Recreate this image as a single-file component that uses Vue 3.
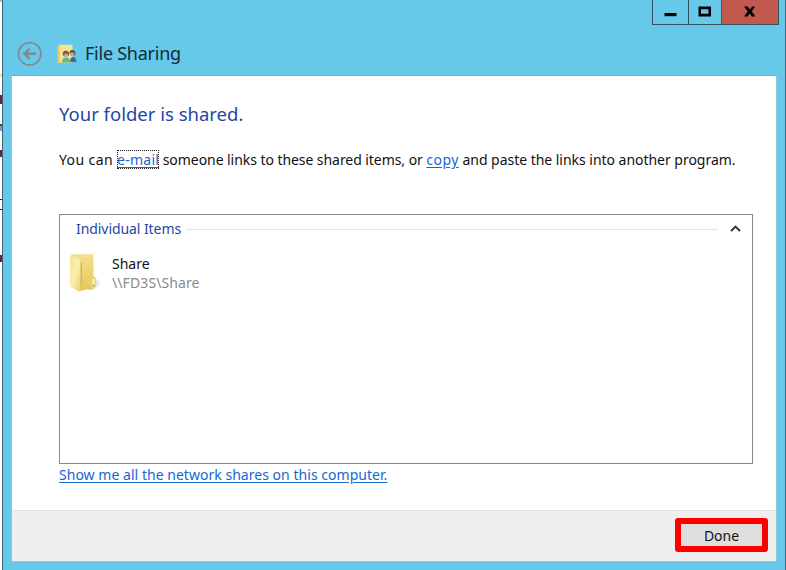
<script setup>
// Slivers of the window behind the dialog: [top, height, colour]
const slivers = [
  [0, 2, '#b9b9b9'],
  [74, 3, '#f4dc8c'],
  [95, 9, '#6b2344'],
  [124, 2, '#34445c'],
  [126, 5, '#7d9bd0'],
  [150, 7, '#6b2344'],
  [199, 1, '#222'],
  [209, 1, '#222'],
  [255, 7, '#6b2344'],
]
</script>

<template>
  <div class="screen">
    <div class="behind">
      <i v-for="s in slivers" :key="s[0]" :style="{ top: s[0] + 'px', height: s[1] + 'px', background: s[2] }"></i>
    </div>
    <div class="window">
      <header class="titlebar">
        <svg class="back" width="26" height="26" viewBox="0 0 26 26" fill="none" stroke="#80898e">
          <circle cx="12.700" cy="12.800" r="11.300" stroke-width="1.600" />
          <path d="M19 12.800H8.500M12.500 7.800l-5 5 5 5" stroke-width="2.600" />
        </svg>
        <svg class="logo" width="20" height="20" viewBox="0 0 20 20">
          <path d="M.8 1Q8 .3 15.500 1v17.500L.8 19z" fill="#f9e391" />
          <path d="M.8 1l2 .3V19h-2z" fill="#e8c96a" />
          <path d="M13 18q0-5 3-5t3.500 5z" fill="#356fa4" />
          <circle cx="15.500" cy="10" r="2.400" fill="#d0a47c" />
          <path d="M12.500 9.800Q12 6 15.200 6t3.300 3.800l-.8 2.200-1-3.200-2.700-.3z" fill="#5a5148" />
          <path d="M5 18.500q0-5 4-5t4.500 5z" fill="#62b98f" />
          <circle cx="9" cy="10.800" r="2.500" fill="#d6ad88" />
          <path d="M5.800 11Q5.500 6.800 8.800 6.800t3.400 3.500l-.8 2-1-2.900-2.500.2-.8 2.500z" fill="#665848" />
        </svg>
        <h1>File Sharing</h1>
        <div class="controls">
          <button class="min"><svg width="14" height="12"><path d="M.5 7h12v3.200H.5z" /></svg></button>
          <button class="max"><svg width="14" height="12"><path fill-rule="evenodd" d="M.5 .5h12.500v10H.5zM3 3.300v4.500h7.500V3.300z" /></svg></button>
          <button class="close"><svg width="14" height="12"><path d="M1 .5h3.700L7 3.600 9.300 .5H12L8.800 5.500l3.600 5H8.900L6.800 7.500 4.600 10.500H1l3.700-5z" /></svg></button>
        </div>
      </header>

      <main>
        <section class="body">
          <h2>Your folder is shared.</h2>
          <p class="info"><span class="lead">You can </span><a class="focus">e-mail</a><span class="middle"> someone links to these shared items, or </span><a class="copy">copy</a><span class="tail"> and paste the links into another program.</span></p>
          <div class="list">
            <div class="group">
              <span>Individual Items</span>
              <hr />
              <svg width="12" height="10" fill="none" stroke="#333" stroke-width="1.900"><path d="M2 7L6.500 2.500 11 7" /></svg>
            </div>
            <div class="item">
              <svg width="38" height="42" viewBox="0 0 38 42">
                <defs>
                  <linearGradient id="front" x2="1" y2="1"><stop stop-color="#f3e39a" /><stop offset=".5" stop-color="#fbefae" /><stop offset="1" stop-color="#ecd06c" /></linearGradient>
                  <linearGradient id="inner" x2="0" y2="1"><stop stop-color="#f3e08d" /><stop offset="1" stop-color="#e5c658" /></linearGradient>
                  <linearGradient id="shade" x2="1"><stop stop-color="#999" stop-opacity=".6" /><stop offset="1" stop-color="#bbb" stop-opacity="0" /></linearGradient>
                </defs>
                <path d="M20 38l7-12 8 5-10 7z" fill="url(#shade)" />
                <path d="M3 3.500Q4 2.300 6 2.200L24 2.300q1.500.2 1.500 1.700v20l2 2v8.500L25 36l-13 3z" fill="url(#inner)" />
                <path d="M12 10l1.800 1v21L12 38z" fill="#d3b24c" />
                <path d="M2 4q0-1 1.500-.5L10.500 7q2 1 2 3V38q0 2-1.500 1.500l-7.500-4Q2 34.500 2 33z" fill="url(#front)" />
                <path d="M22 27l2.500-3 3 2.500v8L25 36.500l-3 .5z" fill="#ecd16c" />
                <path d="M25.500 27.500v5" stroke="#fffbe2" stroke-width="1.600" stroke-linecap="round" />
                <path d="M25.500 32.500v2" stroke="#79b5c4" stroke-width="1.600" />
              </svg>
              <div class="names"><b>Share</b><span>\\FD3S\Share</span></div>
            </div>
          </div>
          <a class="all">Show me all the network shares on this computer.</a>
        </section>
        <footer><button class="done">Done</button></footer>
      </main>
    </div>
  </div>
</template>

<style>
body { overflow: hidden; }
</style>

<style scoped>
* { box-sizing: border-box; }
.screen { display: flex; width: 786px; height: 570px; background: #fff; font: 14px/20px "Noto Sans", "Open Sans", sans-serif; color: #111; white-space: nowrap; }
.behind { position: relative; width: 2px; }
.behind i { position: absolute; left: 0; width: 2px; }
.window { display: flex; flex-direction: column; width: 784px; height: 570px; padding: 0 8px 0 8px; background: #66c9e9; border-left: 1px solid #3b6678; border-right: 1px solid #316b80; }
.titlebar { display: flex; height: 75px; padding: 41px 0 0 6px; flex: none; }
.back { flex: none; }
.logo { flex: none; margin: 3px 0 0 14px; }
h1 { margin: 0 0 0 8px; font-size: 18px; line-height: 25px; font-weight: 400; color: #102d38; letter-spacing: -.25px; }
.controls { display: flex; margin: -41px -2px 0 auto; height: 25px; border: 1px solid #36525d; border-top: 0; }
.controls button { display: flex; align-items: flex-start; justify-content: center; padding: 6px 0 0; border: 0; background: none; }
.controls .min { width: 35px; }
.controls .max { width: 33px; border-left: 1px solid #36525d; }
.controls .close { width: 57px; background: #c2594f; border-left: 1px solid #664a4b; }
main { display: flex; flex-direction: column; width: 766px; height: 487px; border: 1px solid #8ecbe3; border-top-color: #78a9bf; background: #fff; }
.body { display: flex; flex-direction: column; align-items: flex-start; height: 434px; padding: 25px 24px 0 47px; }
h2 { margin: 0; font-size: 18.500px; line-height: 26px; font-weight: 400; color: #2545a5; letter-spacing: 0; }
.info { margin: 23px 0 0; }
.lead { letter-spacing: .4px; }
.middle { letter-spacing: -.06px; }
.tail { letter-spacing: -.03px; }
a { color: #1668d0; text-decoration: underline; text-underline-offset: 2px; }
.focus { letter-spacing: .25px; outline: 1px dotted #222; outline-offset: -1px; }
.copy { letter-spacing: .45px; }
.list { width: 694px; height: 250px; margin-top: 44px; border: 1px solid #858990; }
.group { display: flex; align-items: center; height: 28px; padding: 0 11px 0 16px; color: #2545a5; }
.group span { letter-spacing: -.07px; }
.group hr { flex: 1; height: 1px; margin: 0 11px 0 5px; border: 0; background: #d7e6f6; }
.item { display: flex; padding: 9px 0 0 8px; }
.names { display: flex; flex-direction: column; margin-left: 6px; line-height: 19px; padding-top: 2px; }
.names b { font-weight: 400; }
.names span { color: #8b8b8b; letter-spacing: .1px; }
.all { margin-top: 1px; letter-spacing: .03px; }
footer { display: flex; justify-content: flex-end; height: 51px; padding: 7px 8px 0; background: #efefef; border-top: 1px solid #e3e3e3; }
.done { width: 93px; height: 34px; padding: 2px 0 0; border: 6px solid #fe0000; border-radius: 3px; background: #dedede; color: #111; font: inherit; line-height: 18px; }
</style>
